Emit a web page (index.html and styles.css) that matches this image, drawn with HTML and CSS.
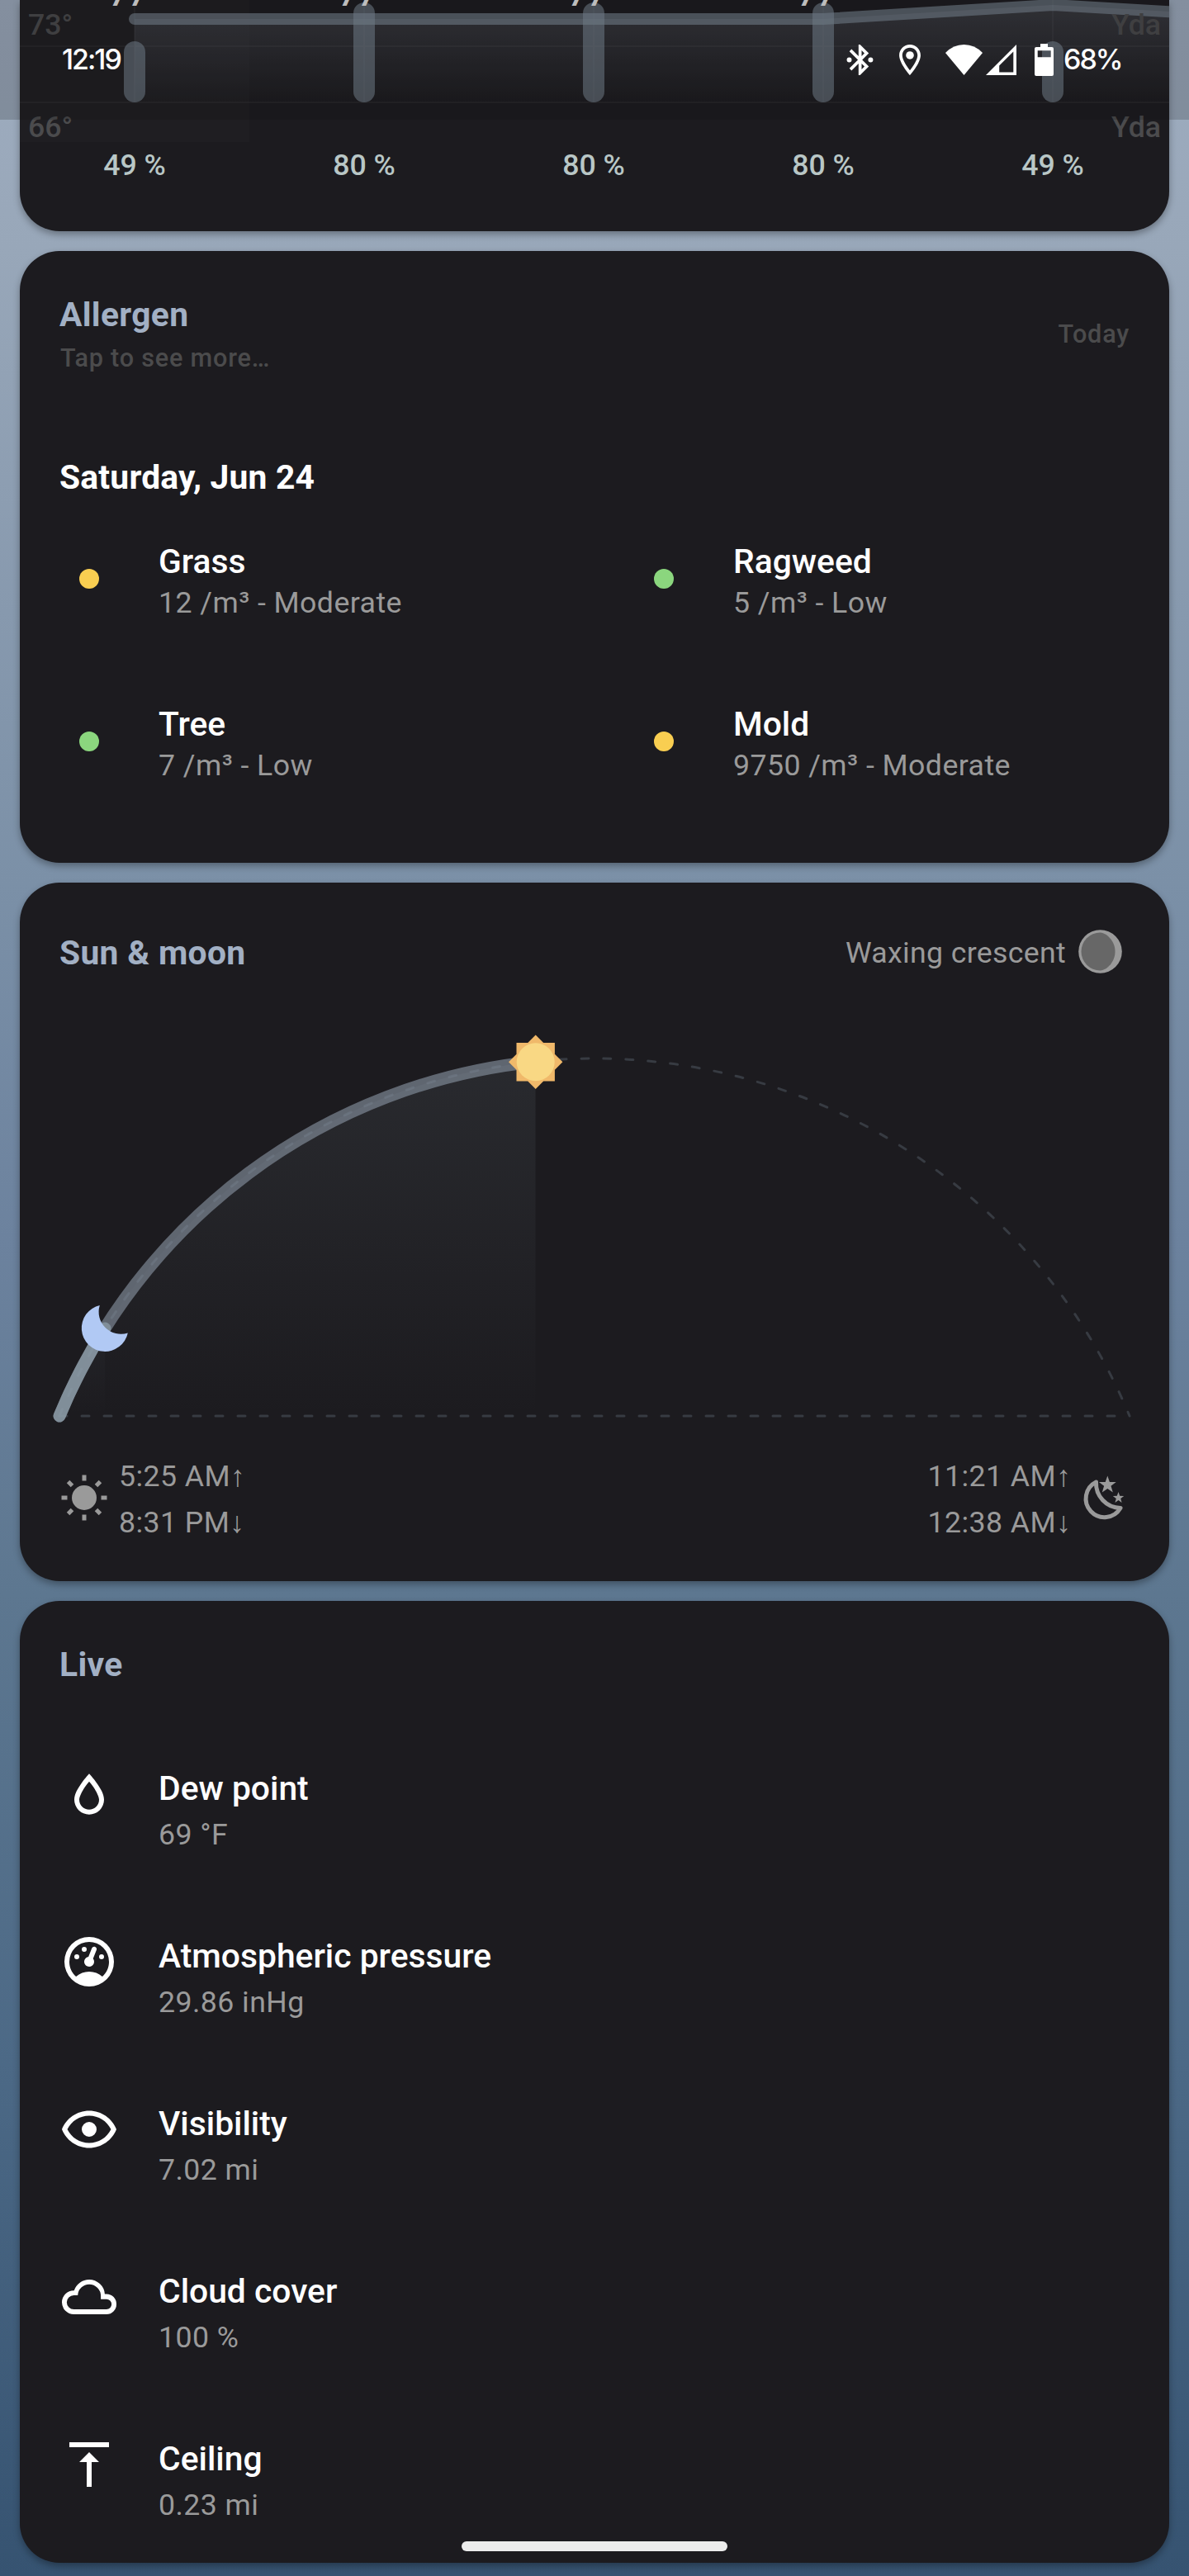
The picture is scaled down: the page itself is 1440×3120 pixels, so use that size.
FILE: index.html
```html
<!DOCTYPE html>
<html lang="en">
<head>
<meta charset="utf-8">
<title>Weather</title>
<link rel="stylesheet" href="styles.css">
</head>
<body>
<div class="status-bar">
  <span class="clock">12:19</span>
  <div class="status-icons">
    <svg class="i-bt" viewBox="3 2 18 20"><path d="M14.88,16.29L13,18.17V14.41M13,5.83L14.88,7.71L13,9.58M17.71,7.71L12,2H11V9.58L6.41,5L5,6.41L10.59,12L5,17.58L6.41,19L11,14.41V22H12L17.71,16.29L13.41,12Z"/><circle cx="4.9" cy="12" r="1.6"/><circle cx="18.9" cy="12" r="1.6"/></svg>
    <svg class="i-pin" viewBox="5 2 14 20"><path d="M12 2C8.13 2 5 5.13 5 9c0 5.25 7 13 7 13s7-7.75 7-13c0-3.87-3.13-7-7-7zM7 9c0-2.76 2.24-5 5-5s5 2.24 5 5c0 2.88-2.88 7.19-5 9.88C9.92 16.21 7 11.85 7 9z"/><circle cx="12" cy="9" r="2.6"/></svg>
    <svg class="i-wifi" viewBox="0 0 45 37"><path d="M22.5 37L0 10Q9.500 0 22.500 0T45 10Z"/></svg>
    <svg class="i-signal" viewBox="0 0 37 37"><path fill-rule="evenodd" d="M37 0V37H0ZM33.300 8.500L16.200 25.500V33.500H33.300Z"/></svg>
    <svg class="i-battery" viewBox="0 0 23 39"><path fill-rule="evenodd" d="M7 0H16V4H21Q23 4 23 6V37Q23 39 21 39H2Q0 39 0 37V6Q0 4 2 4H7ZM3.700 8.300V16.300H19.700V8.300Z"/></svg>
  </div>
  <span class="level">68%</span>
</div>

<main class="cards">
  <section class="card forecast">
    <svg class="trend" viewBox="24 0 1392 172">
      <defs>
        <linearGradient id="temp" x1="0" y1="0" x2="0" y2="124" gradientUnits="userSpaceOnUse">
          <stop offset="0" stop-color="#9299a8" stop-opacity=".24"/>
          <stop offset="1" stop-color="#9299a8" stop-opacity="0"/>
        </linearGradient>
      </defs>
      <rect class="today" x="24" y="0" width="278" height="172"/>
      <path class="grid" d="M24 56H1416M24 124H1416M163 0V124M441 0V124M719 0V124M997 0V124M1275 0V124"/>
      <path fill="url(#temp)" d="M163 23H997L1275 6L1416 14V124H163Z"/>
      <path class="temp-line" d="M163 23H997L1275 6L1420 14.500"/>
      <g class="rain">
        <rect x="150" y="50" width="26" height="74" rx="13"/>
        <rect x="428" y="3" width="26" height="121" rx="13"/>
        <rect x="706" y="3" width="26" height="121" rx="13"/>
        <rect x="984" y="3" width="26" height="121" rx="13"/>
        <rect x="1262" y="50" width="26" height="74" rx="13"/>
      </g>
      <g class="temps">
        <text x="163" y="7">77°</text><text x="441" y="7">77°</text><text x="719" y="7">77°</text><text x="997" y="7">77°</text>
      </g>
      <g class="axis">
        <text x="34" y="42">73°</text><text x="34" y="166">66°</text>
        <text class="end" x="1406" y="42">Yda</text><text class="end" x="1406" y="166">Yda</text>
      </g>
    </svg>
    <div class="chances"><span>49 %</span><span>80 %</span><span>80 %</span><span>80 %</span><span>49 %</span></div>
  </section>

  <section class="card allergen">
    <header class="allergen-head">
      <div><h2>Allergen</h2><p class="hint">Tap to see more…</p></div>
      <span class="hint">Today</span>
    </header>
    <h3>Saturday, Jun 24</h3>
    <div class="pollens">
      <div class="pollen"><i class="dot moderate"></i><div><b>Grass</b><p>12 /m³ - Moderate</p></div></div>
      <div class="pollen"><i class="dot low"></i><div><b>Ragweed</b><p>5 /m³ - Low</p></div></div>
      <div class="pollen"><i class="dot low"></i><div><b>Tree</b><p>7 /m³ - Low</p></div></div>
      <div class="pollen"><i class="dot moderate"></i><div><b>Mold</b><p>9750 /m³ - Moderate</p></div></div>
    </div>
  </section>

  <section class="card astro">
    <header class="astro-head">
      <h2>Sun &amp; moon</h2>
      <div class="phase"><span>Waxing crescent</span>
        <svg viewBox="-26.500 -26.500 53 53"><circle r="26.300" fill="#9a9a9a"/><path fill="#676767" d="M0 -23A23 23 0 0 0 0 23C9 22 18 12 18 0S9 -22 0 -23Z"/></svg>
      </div>
    </header>
    <svg class="arc" viewBox="24 1200 1392 540">
      <defs>
        <linearGradient id="day" x1="0" y1="1282" x2="0" y2="1715" gradientUnits="userSpaceOnUse">
          <stop offset="0" stop-color="#809098" stop-opacity=".13"/>
          <stop offset="1" stop-color="#809098" stop-opacity="0"/>
        </linearGradient>
        <linearGradient id="night" x1="0" y1="1500" x2="0" y2="1715" gradientUnits="userSpaceOnUse">
          <stop offset="0" stop-color="#8a9aa8" stop-opacity=".09"/>
          <stop offset="1" stop-color="#8a9aa8" stop-opacity="0"/>
        </linearGradient>
      </defs>
      <path class="dash" d="M72 1715A701.400 701.400 0 0 1 1368 1715"/>
      <path class="dash" d="M72 1715H1368"/>
      <path fill="url(#day)" d="M72 1715A701.400 701.400 0 0 1 648.500 1285.700V1715Z"/>
      <path fill="url(#night)" d="M72 1715A701.400 701.400 0 0 1 127 1609V1715Z"/>
      <path class="sun-path" d="M72 1715A701.400 701.400 0 0 1 648.500 1285.700"/>
      <path class="moon-path" d="M72 1715A701.400 701.400 0 0 1 127 1609"/>
      <g transform="translate(648.700 1286.300)"><path fill="#f0b96a" d="M-23.200-23.200H23.200V23.200H-23.200ZM0-32.700L32.700 0L0 32.700L-32.700 0Z"/><circle r="23" fill="#f9d884"/></g>
      <path fill="#b1c9f4" d="M120.800 1581A28.300 28.300 0 1 0 154.800 1614.400A26.800 26.800 0 0 1 120.800 1581Z"/>
    </svg>
    <footer class="times">
      <svg class="icon-sun" viewBox="-30 -30 60 60"><circle r="15"/><path d="M-2.500-27.500H2.500V-20.500H-2.500ZM-2.500 20.500H2.500V27.500H-2.500Z"/><path transform="rotate(45)" d="M-2.500-27.500H2.500V-20.500H-2.500ZM-2.500 20.500H2.500V27.500H-2.500Z"/><path transform="rotate(90)" d="M-2.500-27.500H2.500V-20.500H-2.500ZM-2.500 20.500H2.500V27.500H-2.500Z"/><path transform="rotate(135)" d="M-2.500-27.500H2.500V-20.500H-2.500ZM-2.500 20.500H2.500V27.500H-2.500Z"/></svg>
      <p>5:25 AM<span class="arrow">↑</span><br>8:31 PM<span class="arrow">↓</span></p>
      <p class="moon-times">11:21 AM<span class="arrow">↑</span><br>12:38 AM<span class="arrow">↓</span></p>
      <svg class="icon-moon" viewBox="1308 1784 60 60">
        <path fill="none" stroke="#9a9a9a" stroke-width="5" stroke-linejoin="round" d="M1327.500 1795A22.500 22.500 0 1 0 1357 1826.500A30 30 0 0 1 1327.500 1795Z"/>
        <path d="M1341.300 1787.500L1343.900 1794.900L1351.700 1795L1345.500 1799.800L1347.800 1807.500L1341.300 1803L1334.800 1807.500L1337.100 1799.800L1330.900 1795L1338.700 1794.900ZM1354.500 1807L1356.200 1811.700L1361.200 1811.900L1357.200 1815L1358.600 1820L1354.500 1817.100L1350.400 1820L1351.800 1815L1347.800 1811.900L1352.800 1811.700Z"/>
      </svg>
    </footer>
  </section>

  <section class="card live">
    <h2>Live</h2>
    <ul>
      <li><svg viewBox="0 0 24 24"><path d="M12,3.77L11.25,4.61C11.25,4.61 9.97,6.06 8.68,7.94C7.39,9.82 6,12.07 6,14.23A6,6 0 0,0 12,20.23A6,6 0 0,0 18,14.23C18,12.07 16.61,9.82 15.32,7.94C14.03,6.06 12.75,4.61 12.75,4.61L12,3.77M12,6.9C12.44,7.42 12.84,7.85 13.68,9.07C14.89,10.83 16,13.07 16,14.23C16,16.45 14.22,18.23 12,18.23C9.78,18.23 8,16.45 8,14.23C8,13.07 9.11,10.83 10.32,9.07C11.16,7.85 11.56,7.42 12,6.9Z"/></svg><div><b>Dew point</b><p>69 °F</p></div></li>
      <li><svg viewBox="0 0 24 24"><path d="M12,2A10,10 0 0,0 2,12A10,10 0 0,0 12,22A10,10 0 0,0 22,12A10,10 0 0,0 12,2M12,4A8,8 0 0,1 20,12C20,14.4 19,16.5 17.3,18C15.9,16.7 14,16 12,16C10,16 8.2,16.7 6.7,18C5,16.5 4,14.4 4,12A8,8 0 0,1 12,4M14,5.89C13.62,5.9 13.26,6.15 13.1,6.54L11.81,9.77L11.71,10C11,10.13 10.41,10.6 10.14,11.26C9.73,12.29 10.23,13.45 11.26,13.86C12.29,14.27 13.45,13.77 13.86,12.74C14.12,12.08 14,11.32 13.57,10.76L13.67,10.5L14.96,7.29L14.97,7.26C15.17,6.75 14.92,6.17 14.41,5.96C14.28,5.91 14.15,5.89 14,5.89M10,6A1,1 0 0,0 9,7A1,1 0 0,0 10,8A1,1 0 0,0 11,7A1,1 0 0,0 10,6M7,9A1,1 0 0,0 6,10A1,1 0 0,0 7,11A1,1 0 0,0 8,10A1,1 0 0,0 7,9M17,9A1,1 0 0,0 16,10A1,1 0 0,0 17,11A1,1 0 0,0 18,10A1,1 0 0,0 17,9Z"/></svg><div><b>Atmospheric pressure</b><p>29.86 inHg</p></div></li>
      <li><svg viewBox="0 0 24 24"><path d="M12,9A3,3 0 0,1 15,12A3,3 0 0,1 12,15A3,3 0 0,1 9,12A3,3 0 0,1 12,9M12,4.5C17,4.5 21.27,7.61 23,12C21.27,16.39 17,19.5 12,19.5C7,19.5 2.73,16.39 1,12C2.73,7.61 7,4.5 12,4.5M3.18,12C4.83,15.36 8.24,17.5 12,17.5C15.76,17.5 19.17,15.36 20.82,12C19.17,8.64 15.76,6.5 12,6.5C8.24,6.5 4.83,8.64 3.18,12Z"/></svg><div><b>Visibility</b><p>7.02 mi</p></div></li>
      <li><svg viewBox="0 0 24 24"><path fill-rule="evenodd" d="M5.800 19A4.800 4.800 0 0 1 1 14.200A4.800 4.800 0 0 1 5.900 9.400A6.500 6.500 0 0 1 12 5A6.400 6.300 0 0 1 18.300 10.800H19A4 4.100 0 0 1 23 15A4 4 0 0 1 19 19ZM5.800 17H19A2.050 2.050 0 0 0 19 12.900H16.700V11.700A4.700 4.700 0 0 0 12 6.900A4.700 4.700 0 0 0 7.400 11.300H5.800A2.850 2.850 0 0 0 5.800 17Z"/></svg><div><b>Cloud cover</b><p>100 %</p></div></li>
      <li><svg viewBox="0 0 24 24"><path d="M8,11H11V21H13V11H16L12,7L8,11M4,3V5H20V3H4Z"/></svg><div><b>Ceiling</b><p>0.23 mi</p></div></li>
    </ul>
  </section>
</main>
<div class="nav-handle"></div>
</body>
</html>
```
FILE: styles.css
```css
* { box-sizing: border-box; }

body {
  position: relative;
  margin: 0;
  width: 1440px;
  height: 3120px;
  overflow: hidden;
  font-family: Roboto, "Liberation Sans", sans-serif;
  font-size: 35.7px;
  line-height: 42px;
  letter-spacing: .012em;
  color: #9a9a9a;
  background: linear-gradient(#9fadc0 0, #98a7b9 300px, #8799ae 740px, #7b90a7 1070px, #6c829e 1500px, #5d7790 1930px, #4c6986 2500px, #365371 3120px);
}

h2, h3, p, ul { margin: 0; padding: 0; list-style: none; }
svg { display: block; flex: none; fill: #9a9a9a; }

h2, h3, b {
  display: block;
  font-size: 40.8px;
  line-height: 48px;
  letter-spacing: .008em;
  font-weight: 700;
}
h2 { color: #a2b0c4; }
h3 { color: #fff; letter-spacing: .005em; }
b { color: #fff; font-weight: 500; letter-spacing: 0; }

/* System overlays */
.status-bar {
  position: absolute;
  z-index: 2;
  top: 0;
  left: 0;
  width: 100%;
  height: 145px;
  padding: 53px 83px 0 75px;
  display: flex;
  align-items: flex-start;
  background: rgba(18, 18, 14, .19);
  color: #fff;
  font-family: Inter, sans-serif;
  font-weight: 500;
  font-size: 34px;
  line-height: 38px;
  letter-spacing: -2px;
}
.status-bar svg { fill: #fff; }
.status-icons { display: flex; margin-left: auto; padding-top: 1px; }
.i-bt { width: 33.300px; height: 37px; }
.i-pin { width: 26px; height: 37px; margin-left: 30.500px; }
.i-wifi { width: 45px; height: 37px; margin-left: 30px; }
.i-signal { width: 37px; height: 37px; margin-left: 4.500px; }
.i-battery { width: 23px; height: 39px; margin: -1px 0 0 22px; }
.level { width: 69px; margin-left: 12px; }

.nav-handle {
  position: absolute;
  z-index: 2;
  top: 3078px;
  left: 559px;
  width: 322px;
  height: 12px;
  border-radius: 6px;
  background: #ececec;
}

/* Cards */
.cards { display: flex; flex-direction: column; gap: 24px; padding: 0 24px; }
.card {
  padding: 53px 48px 0;
  border-radius: 48px;
  background: #1c1b1f;
  box-shadow: 0 4px 9px rgba(0, 0, 0, .32);
}

.forecast { height: 280px; padding: 0; border-radius: 0 0 48px 48px; overflow: hidden; }
.trend { width: 1392px; height: 172px; }
.today { fill: rgba(255, 255, 255, .014); }
.grid { fill: none; stroke: rgba(255, 255, 255, .045); stroke-width: 2; }
.temp-line { fill: none; stroke: rgba(132, 146, 160, .58); stroke-width: 14; stroke-linecap: round; }
.rain { fill: rgba(132, 146, 160, .55); }
.temps { fill: #e6e6e6; font-size: 41px; font-weight: 500; letter-spacing: 0; text-anchor: middle; }
.axis { fill: #4b4b4d; font-weight: 500; letter-spacing: 0; }
.axis .end { text-anchor: end; }
.chances {
  width: 1390px;
  margin-top: 7px;
  display: grid;
  grid-template-columns: repeat(5, 1fr);
  text-align: center;
  color: #b9c7c6;
  font-weight: 500;
  letter-spacing: 0;
}

.allergen { height: 741px; }
.allergen-head { display: flex; justify-content: space-between; align-items: center; }
.hint { font-size: 30.6px; line-height: 36px; letter-spacing: .026em; font-weight: 500; color: #4b4b4c; }
p.hint { margin: 11px 0 0 1px; }
.allergen h3 { margin-top: 102px; }
.pollens {
  margin: 54px -48px 0 0;
  display: grid;
  grid-template-columns: 696px 1fr;
  grid-auto-rows: 197px;
}
.pollen { display: flex; align-items: flex-start; }
.pollen p { margin-top: 5px; }
.dot { width: 24px; height: 24px; margin: 33px 72px 0 24px; border-radius: 50%; }
.moderate { background: #f9ce51; }
.low { background: #8bd67e; }

.astro { height: 846px; padding-top: 58px; }
.astro-head { display: flex; justify-content: space-between; align-items: center; height: 54px; padding-right: 9px; }
.phase { display: flex; align-items: center; gap: 15px; letter-spacing: .009em; }
.phase svg { width: 53px; height: 53px; margin-bottom: 3px; }
.arc { width: 1392px; height: 540px; margin: 19px -48px 0; }
.dash { fill: none; stroke: #373b42; stroke-width: 3; stroke-linecap: round; stroke-dasharray: 9 18; }
.sun-path, .moon-path { fill: none; stroke-width: 15; stroke-linecap: round; }
.sun-path { stroke: rgba(131, 141, 155, .66); }
.moon-path { stroke: rgba(150, 168, 180, .6); }
.times { display: flex; align-items: center; margin-top: 20px; line-height: 56px; }
.icon-sun, .icon-moon { width: 60px; height: 60px; margin-bottom: 5px; }
.icon-sun { margin-right: 12px; }
.icon-moon { margin-left: 11px; }
.moon-times { margin-left: auto; }
.arrow { font-family: "Liberation Sans", sans-serif; letter-spacing: 0; line-height: 1; }

.live { height: 1165px; }
.live ul { margin-top: 97px; }
.live li { display: flex; height: 203px; }
.live li svg { width: 72px; height: 72px; margin-right: 48px; fill: #fff; }
.live li div { padding-top: 5px; }
.live li p { margin-top: 11px; }
```
